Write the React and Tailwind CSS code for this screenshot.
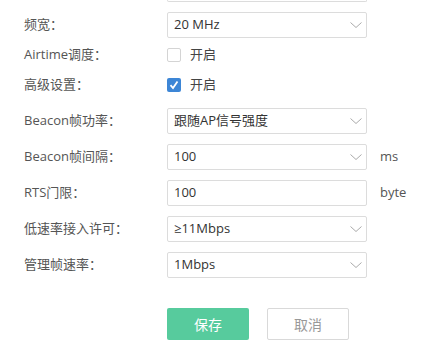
import React, { useState } from "react";

const font = { fontFamily: '"Open Sans", "Noto Sans CJK SC", sans-serif' };

function Chevron() {
    return (
        <svg width="12" height="6" viewBox="0 0 12 6" className="absolute right-[4px] top-[9px]">
            <path d="M0.5 0.5 L6 5.5 L11.5 0.5" fill="none" stroke="#aaaaaa" strokeWidth="1" />
        </svg>
    );
}

function Select({ value }) {
    return (
        <div className="relative w-[200px] h-[26px] border border-[#dcdcdc] rounded-[2px] bg-white flex items-center pl-[6px] text-[13px] text-[#333]">
            {value}
            <Chevron />
        </div>
    );
}

function Input({ value }) {
    return (
        <div className="w-[200px] h-[26px] border border-[#dcdcdc] rounded-[2px] bg-white flex items-center pl-[6px] text-[13px] text-[#333]">
            {value}
        </div>
    );
}

function Checkbox({ checked, onClick }) {
    return (
        <div className="flex items-center gap-[9px] cursor-pointer" onClick={onClick}>
            {checked ? (
                <div className="w-[14px] h-[14px] rounded-[2px] bg-[#3d86d6] flex items-center justify-center">
                    <svg width="10" height="10" viewBox="0 0 10 10">
                        <path d="M1.5 5.2 L4 8 L8.5 1.5" fill="none" stroke="white" strokeWidth="1.8" />
                    </svg>
                </div>
            ) : (
                <div className="w-[14px] h-[14px] rounded-[2px] border border-[#d4d4d4] bg-white" />
            )}
            <span className="text-[13px] text-[#444]">开启</span>
        </div>
    );
}

function Row({ label, children, unit, className = "" }) {
    return (
        <div className={"flex items-center " + className}>
            <div className="w-[143px] text-[13px] text-[#555]">{label}</div>
            {children}
            {unit && <span className="ml-[13px] text-[13px] text-[#555]">{unit}</span>}
        </div>
    );
}

export default function App() {
    const [airtime, setAirtime] = useState(false);
    const [advanced, setAdvanced] = useState(true);

    return (
        <div className="w-[440px] h-[362px] bg-white pl-[24px] overflow-hidden" style={font}>
            <div className="ml-[143px] w-[200px] h-[2px] border-x border-b border-[#dcdcdc] rounded-b-[2px]" />

            <Row label="频宽：" className="mt-[10px]">
                <Select value="20 MHz" />
            </Row>

            <Row label="Airtime调度：" className="mt-[10px] h-[14px]">
                <Checkbox checked={airtime} onClick={() => setAirtime(!airtime)} />
            </Row>

            <Row label="高级设置：" className="mt-[16px] h-[14px]">
                <Checkbox checked={advanced} onClick={() => setAdvanced(!advanced)} />
            </Row>

            <Row label="Beacon帧功率：" className="mt-[16px]">
                <Select value="跟随AP信号强度" />
            </Row>

            <Row label="Beacon帧间隔：" unit="ms" className="mt-[10px]">
                <Select value="100" />
            </Row>

            <Row label="RTS门限：" unit="byte" className="mt-[10px]">
                <Input value="100" />
            </Row>

            <Row label="低速率接入许可：" className="mt-[10px]">
                <Select value="≥11Mbps" />
            </Row>

            <Row label="管理帧速率：" className="mt-[10px]">
                <Select value="1Mbps" />
            </Row>

            <div className="ml-[143px] mt-[30px] flex gap-[18px]">
                <button className="w-[82px] h-[32px] rounded-[2px] bg-[#57cb9d] text-white text-[14px]">
                    保存
                </button>
                <button className="w-[82px] h-[32px] rounded-[2px] border border-[#d9d9d9] bg-white text-[#999] text-[14px]">
                    取消
                </button>
            </div>
        </div>
    );
}
